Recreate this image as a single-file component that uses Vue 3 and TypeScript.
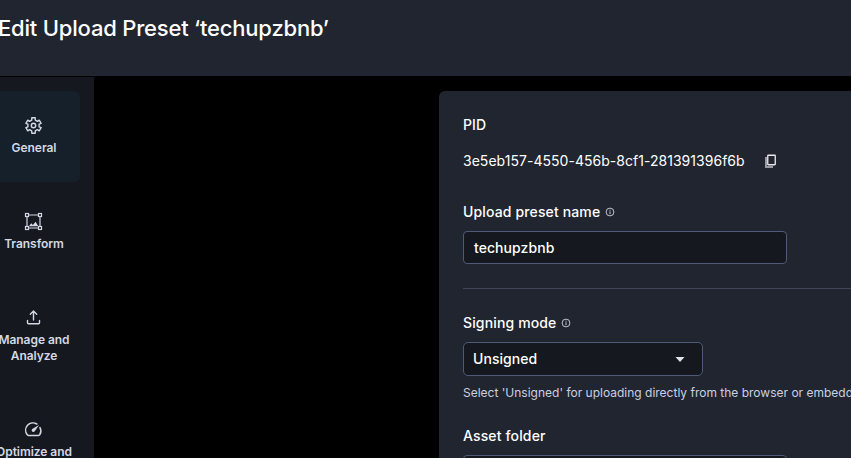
<script setup lang="ts">
interface NavItem {
  id: string
  lines: string[]
  active?: boolean
}

const navItems: NavItem[] = [
  { id: 'general', lines: ['General'], active: true },
  { id: 'transform', lines: ['Transform'] },
  { id: 'manage', lines: ['Manage and', 'Analyze'] },
  { id: 'optimize', lines: ['Optimize and', 'Deliver'] },
]

const presetName = 'techupzbnb'
const pid = '3e5eb157-4550-456b-8cf1-281391396f6b'
</script>

<template>
  <div class="page">
    <header class="header">
      <h1 class="title">Edit Upload Preset ‘{{ presetName }}’</h1>
    </header>
    <div class="body">
      <nav class="sidebar">
        <a v-for="item in navItems" :key="item.id" class="nav-item" :class="{ active: item.active }">
          <svg class="nav-icon" viewBox="-0.5 0.5 20 20" width="20" height="20">
            <g v-if="item.id === 'general'" fill="none" stroke="currentColor" stroke-width="1.4" stroke-linejoin="round">
              <path d="M8.300 2.300h3.400l.1 2.300 2.080 1.310L15.720 4.700l1.900 3.100-2.040.890v2.620l2.040.890-1.900 3.100-1.840-1.210L11.800 15.400l-.1 2.300H8.300l-.1-2.300-2.080-1.310L4.280 15.300l-1.900-3.100 2.040-.890V8.690L2.380 7.800l1.900-3.100 1.840 1.210L8.200 4.600z" />
              <circle cx="10" cy="10" r="2.200" />
            </g>
            <g v-else-if="item.id === 'transform'" fill="none" stroke="currentColor" stroke-width="1.200">
              <path d="M5 3.500h10M5 16.500h10M3.500 5v10M16.500 5v10" />
              <rect x="2" y="2" width="3" height="3" />
              <rect x="15" y="2" width="3" height="3" />
              <rect x="2" y="15" width="3" height="3" />
              <rect x="15" y="15" width="3" height="3" />
              <path d="M5.500 14.700l2.200-3 1.700 1.700 2.700-3.200 2.700 4.500z" fill="currentColor" stroke="none" />
            </g>
            <g v-else-if="item.id === 'manage'" fill="none" stroke="currentColor" stroke-width="1.400" stroke-linecap="round" stroke-linejoin="round">
              <path d="M10 12.500V3.800M6.800 6.700L10 3.500l3.200 3.200M4 13v2.300q0 1 1 1h10q1 0 1-1V13" />
            </g>
            <g v-else fill="none" stroke="currentColor" stroke-width="1.500" stroke-linecap="round" stroke-linejoin="round">
              <path d="M13.300 4.500A7.300 7.300 0 0 0 3.700 15.200q.4.700 1.200.7h10.200q.8 0 1.200-.7A7.300 7.300 0 0 0 16.500 8" />
              <path d="M15.600 5.400l-6.900 4.100a1.700 1.700 0 1 0 2.500 2.300z" fill="currentColor" stroke="none" />
            </g>
          </svg>
          <span v-for="line in item.lines" :key="line" class="nav-label">{{ line }}</span>
        </a>
      </nav>
      <main class="content">
        <section class="panel">
          <div class="label">PID</div>
          <div class="pid-row">
            <span class="pid">{{ pid }}</span>
            <svg class="copy" viewBox="0 0 12 14" width="12" height="14">
              <path d="M1 3v10h7" fill="none" stroke="#989ba2" stroke-width="2" />
              <rect x="2.750" y="1.250" width="7.500" height="9.500" rx=".5" fill="#21252f" stroke="#e8eaf0" stroke-width="1.300" />
            </svg>
          </div>

          <div class="label name-label">
            <span>Upload preset name</span>
            <svg class="info" viewBox="0 0 10 10" width="10" height="10">
              <circle cx="5" cy="5" r="3.900" />
              <path d="M5 4.300v2.900M5 2.700v1" />
            </svg>
          </div>
          <div class="field"><span>{{ presetName }}</span></div>

          <hr class="divider" />

          <div class="label">
            <span>Signing mode</span>
            <svg class="info" viewBox="0 0 10 10" width="10" height="10">
              <circle cx="5" cy="5" r="3.900" />
              <path d="M5 4.300v2.900M5 2.700v1" />
            </svg>
          </div>
          <div class="field select">
            <span>Unsigned</span>
            <svg viewBox="0 0 10 5" width="10" height="5"><path d="M.5 0h9L5 5z" fill="#dfe3ee" /></svg>
          </div>
          <p class="hint">Select 'Unsigned' for uploading directly from the browser or embedded apps</p>

          <div class="label">Asset folder</div>
          <div class="field"></div>
        </section>
      </main>
    </div>
  </div>
</template>

<style>
body {
  background: #000;
  overflow: hidden;
}
</style>

<style scoped>
.page {
  height: 458px;
  overflow: hidden;
  display: flex;
  flex-direction: column;
  background: #000;
  color: #fff;
  font-family: Inter, "Liberation Sans", sans-serif;
}
.header {
  flex: none;
  box-sizing: border-box;
  height: 76px;
  padding-top: 14px;
  background: #21252f;
}
.title {
  margin: 0 0 0 -2px;
  font-size: 22px;
  line-height: 28px;
  font-weight: 500;
  letter-spacing: -0.2px;
  white-space: nowrap;
}
.body {
  flex: 1;
  min-height: 0;
  display: flex;
  margin-top: 1px;
}
.sidebar {
  flex: none;
  width: 94px;
  padding-top: 14px;
  box-sizing: border-box;
  display: flex;
  flex-direction: column;
  gap: 5px;
  background: #15181f;
}
.nav-item {
  flex: none;
  width: 92px;
  margin-left: -12px;
  padding: 25px 0 26px;
  box-sizing: border-box;
  display: flex;
  flex-direction: column;
  align-items: center;
  border-radius: 6px;
  color: #d3d8e4;
}
.nav-item.active {
  background: #15202b;
}
.nav-icon {
  margin: 0 2px 4px 0;
}
.nav-label {
  font-size: 12px;
  line-height: 16px;
  font-weight: 600;
  letter-spacing: -0.05px;
  white-space: nowrap;
}
.content {
  flex: 1;
  min-width: 0;
  padding: 14px 0 0 345px;
}
.panel {
  box-sizing: border-box;
  width: 560px;
  height: 520px;
  padding: 24px;
  border-radius: 6px 0 0 0;
  background: #21252f;
}
.label {
  display: flex;
  align-items: center;
  gap: 5px;
  height: 20px;
  font-size: 14px;
  line-height: 20px;
  font-weight: 500;
  letter-spacing: 0.14px;
  white-space: nowrap;
}
.pid-row {
  display: flex;
  align-items: center;
  gap: 20px;
  height: 20px;
  margin-top: 16px;
  font-size: 14px;
  line-height: 20px;
  letter-spacing: 0.03px;
}
.pid {
  height: 20px;
  padding-bottom: 1px;
}
.name-label {
  margin-top: 31px;
}
.info {
  fill: none;
  stroke: #cfd2da;
  stroke-width: 0.9;
}
.field {
  box-sizing: border-box;
  display: flex;
  align-items: center;
  width: 324px;
  height: 33px;
  margin-top: 9px;
  padding: 0 10px;
  border: 1px solid #4f5a78;
  border-radius: 4px;
  background: #15181f;
  font-size: 14px;
  font-weight: 500;
  letter-spacing: 0.06px;
}
.select {
  justify-content: space-between;
  width: 240px;
  height: 34px;
  padding: 0 17px 0 9px;
  border-radius: 5px;
}
.select span {
  padding-bottom: 1px;
}
.divider {
  height: 1px;
  margin: 24px 0;
  border: 0;
  background: #404658;
}
.hint {
  margin: 8px 0 24px;
  font-size: 12px;
  line-height: 18px;
  color: #c9d0e2;
  white-space: nowrap;
}
</style>
